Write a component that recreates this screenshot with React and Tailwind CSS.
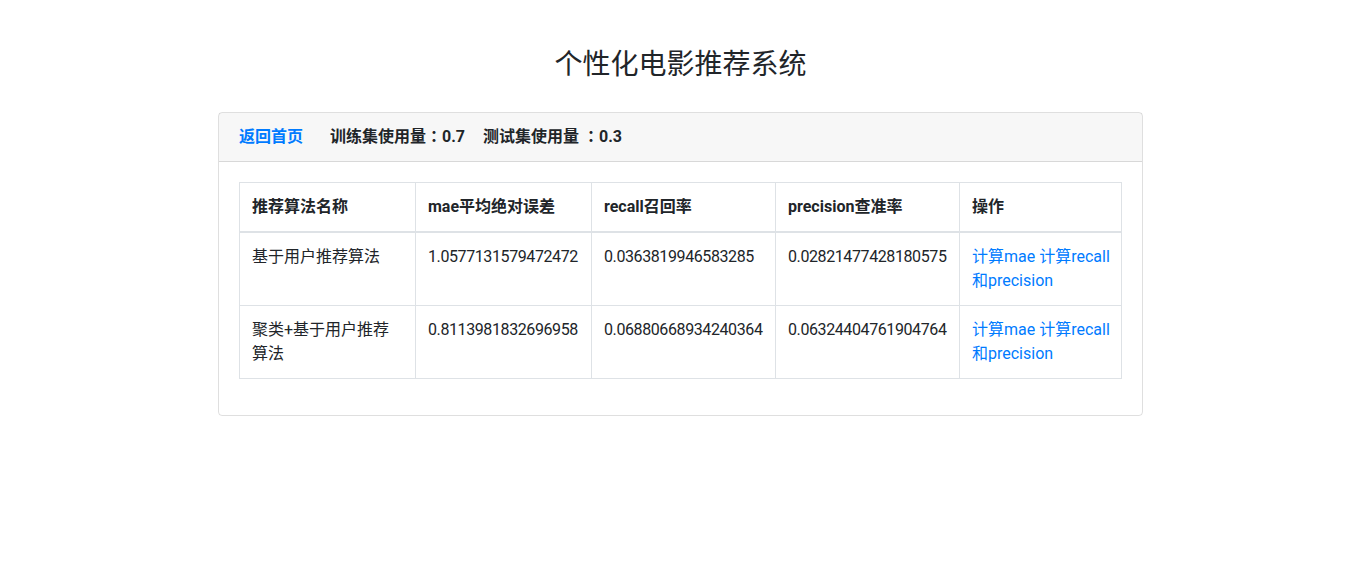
export default function App() {
  const font = { fontFamily: 'Roboto, "Noto Sans CJK SC", sans-serif' };
  const rows = [
    ["基于用户推荐算法", "1.0577131579472472", "0.0363819946583285", "0.02821477428180575"],
    ["聚类+基于用户推荐算法", "0.8113981832696958", "0.06880668934240364", "0.06324404761904764"],
  ];
  const td = "border border-[#dee2e6] p-3 align-top";
  const num = td + " tracking-[-0.4px]";
  const colon = "font-['Noto_Sans_CJK_JP',sans-serif] leading-none";
  return (
    <div className="min-h-[561px] bg-white text-[#212529] text-[16px] leading-6" style={font}>
      <h3 className="pt-12 mb-[30px] text-center text-[28px] leading-[1.2] font-normal">个性化电影推荐系统</h3>
      <div className="mx-auto w-[925px] border border-[rgba(0,0,0,0.125)] rounded-[4px]">
        <div className="h-[49px] bg-[rgba(0,0,0,0.03)] border-b border-[rgba(0,0,0,0.125)] px-5 flex items-center font-bold">
          <a className="text-[#007bff]">返回首页</a>
          <span className="ml-[27px]">训练集使用量<span className={colon}>：</span>0.7</span>
          <span className="ml-[18px]">测试集使用量 <span className={colon}>：</span>0.3</span>
        </div>
        <div className="p-5">
          <table className="w-full border-collapse mb-4 table-fixed">
            <thead>
              <tr>
                <th className={td + " w-[176px] text-left font-bold border-b-2"}>推荐算法名称</th>
                <th className={td + " w-[176px] text-left font-bold border-b-2"}>mae平均绝对误差</th>
                <th className={td + " w-[184px] text-left font-bold border-b-2"}>recall召回率</th>
                <th className={td + " w-[184px] text-left font-bold border-b-2"}>precision查准率</th>
                <th className={td + " text-left font-bold border-b-2"}>操作</th>
              </tr>
            </thead>
            <tbody>
              {rows.map((r, i) => (
                <tr key={i}>
                  <td className={td}>{r[0]}</td>
                  <td className={num}>{r[1]}</td>
                  <td className={num}>{r[2]}</td>
                  <td className={num}>{r[3]}</td>
                  <td className={td + " pr-2"}>
                    <a className="text-[#007bff]">计算mae</a>{" "}
                    <a className="text-[#007bff]">计算recall和precision</a>
                  </td>
                </tr>
              ))}
            </tbody>
          </table>
        </div>
      </div>
    </div>
  );
}
